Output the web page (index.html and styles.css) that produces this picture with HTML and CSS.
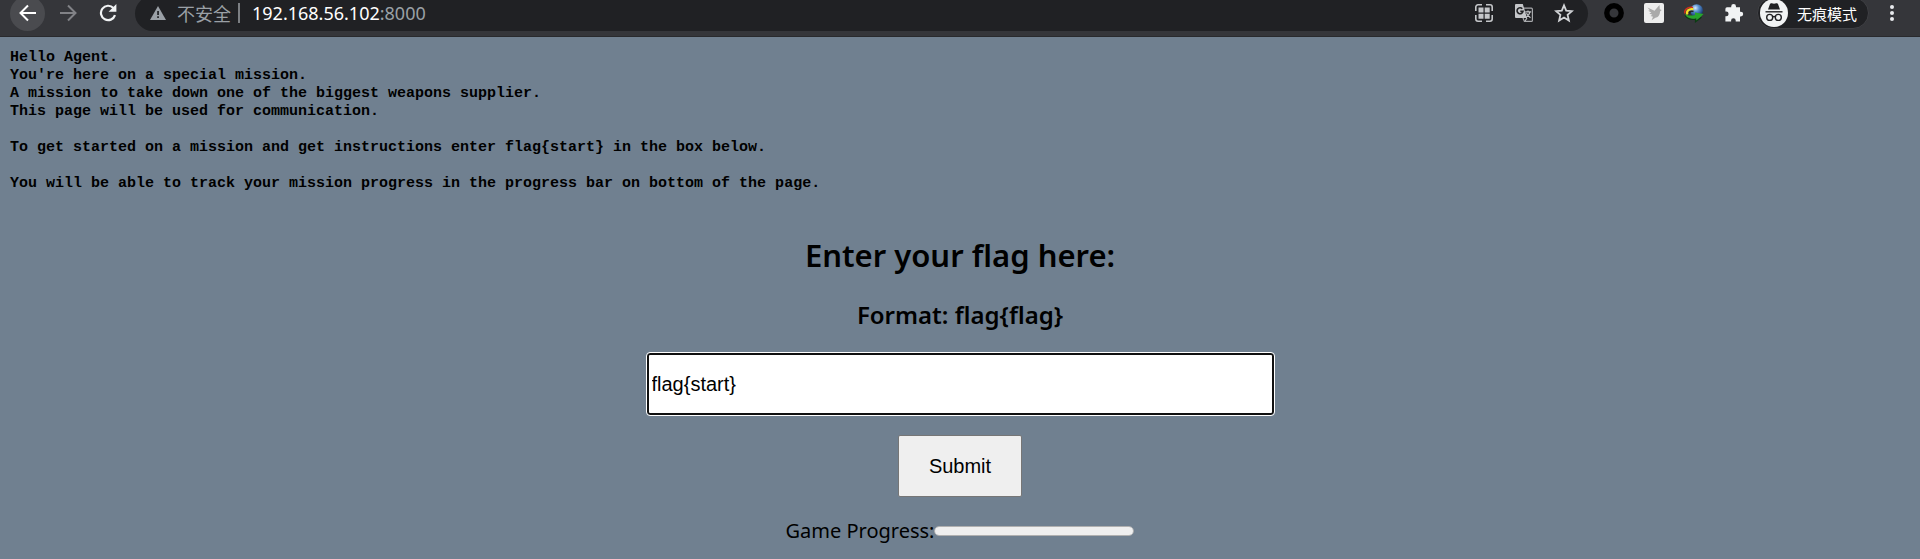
FILE: index.html
```html
<!DOCTYPE html>
<html lang="en">
<head>
<meta charset="utf-8">
<title>192.168.56.102:8000</title>
<link rel="stylesheet" href="styles.css">
</head>
<body>
<header class="toolbar">
  <nav class="nav">
    <button class="nav-button nav-back" type="button" aria-label="Back">
      <svg width="18" height="18" viewBox="0 0 18 18" fill="none" stroke="#fff" stroke-width="2"><path d="M17 9H2M9 1.5L1.5 9L9 16.5"/></svg>
    </button>
    <button class="nav-button" type="button" aria-label="Forward">
      <svg width="18" height="18" viewBox="0 0 18 18" fill="none" stroke="#818286" stroke-width="2"><path d="M1 9H16M9 1.5L16.5 9L9 16.5"/></svg>
    </button>
    <button class="nav-button" type="button" aria-label="Reload">
      <svg width="18" height="18" viewBox="0 0 18 18"><path d="M14.4 4A7.2 7.2 0 1 0 16 11.2" fill="none" stroke="#f1f3f4" stroke-width="2.2"/><path d="M17.4 0V7.8H9.6Z" fill="#f1f3f4"/></svg>
    </button>
  </nav>
  <div class="omnibox">
    <svg width="16" height="14" viewBox="0 0 16 14"><path d="M8 0L16 14H0Z" fill="#9aa0a6"/><path d="M7.2 5h1.7v4H7.2zM7.2 10.3h1.7v1.7H7.2z" fill="#202124"/></svg>
    <span class="security">不安全</span>
    <span class="divider"></span>
    <span class="url">192.168.56.102<span class="port">:8000</span></span>
    <div class="actions">
      <button class="icon-button" type="button" aria-label="QR code">
        <svg width="20" height="20" viewBox="0 0 20 20"><path d="M1.8 8V4a2.2 2.2 0 0 1 2.2-2.2h4M12 1.8h4A2.2 2.2 0 0 1 18.2 4v4M18.2 12v4a2.2 2.2 0 0 1-2.2 2.2h-4M8 18.2H4A2.2 2.2 0 0 1 1.8 16v-4" fill="none" stroke="#c4c6c9" stroke-width="1.6"/><path d="M4.5 4.5h5v5h-5zM10.7 4.5h5v5h-5zM4.5 10.7h5v5h-5zM10.7 10.7h5v5h-5z" fill="#c4c6c9"/></svg>
      </button>
      <button class="icon-button" type="button" aria-label="Translate">
        <svg width="20" height="20" viewBox="0 0 20 20"><path d="M9 5.2h8.4a1 1 0 0 1 1 1v11.2a1 1 0 0 1-1 1h-7L9 15" fill="none" stroke="#a6a8ab" stroke-width="1.2"/><path d="M2 1h6.8l4.2 14H2a1 1 0 0 1-1-1V2a1 1 0 0 1 1-1z" fill="#c4c6c9"/><path d="M8.3 5.8A3 3 0 1 0 9 8.4H6.3" fill="none" stroke="#202124" stroke-width="1.6"/><path d="M11.2 8.8h6M14 7.5v1.3M16 8.8c-.6 2.8-2.2 4.5-4 5.7M12.5 10.2c.9 2 2.3 3.4 4 4.5M11 18l2-3" fill="none" stroke="#c4c6c9" stroke-width="1.2"/></svg>
      </button>
      <button class="icon-button" type="button" aria-label="Bookmark">
        <svg width="20" height="20" viewBox="0 0 20 20"><path d="M10 2.4l2.2 5.2 5.7.5-4.3 3.8 1.3 5.6L10 14.5l-4.9 3 1.3-5.6-4.3-3.8 5.7-.5z" fill="none" stroke="#d2d4d7" stroke-width="1.8"/></svg>
      </button>
    </div>
  </div>
  <div class="extensions">
    <button class="icon-button" type="button" aria-label="Ring extension">
      <svg width="20" height="20" viewBox="0 0 20 20"><circle cx="10" cy="10" r="7.2" fill="#35363a" stroke="#000" stroke-width="5.4"/></svg>
    </button>
    <button class="icon-button" type="button" aria-label="Bird extension">
      <svg width="20" height="20" viewBox="0 0 20 20"><rect width="20" height="20" rx="2" fill="#ededed"/><path d="M3.5 4.5l7 3.2L15.5 2l.3 4.2 1.9.9-1.7 1.3c0 4-2.2 5.8-4.6 6.3L7.6 17.3 9 13.8 6.5 13l1.8-1.2-3-1.2 2-1.2L4.2 7.8l1.7-.5z" fill="#aaa"/></svg>
    </button>
    <button class="icon-button" type="button" aria-label="Download manager">
      <svg width="20" height="20" viewBox="0 0 20 20"><defs><radialGradient id="globe" cx=".4" cy=".3" r=".7"><stop offset="0" stop-color="#d9ecff"/><stop offset=".4" stop-color="#5b93d0"/><stop offset="1" stop-color="#102f66"/></radialGradient></defs><circle cx="12.6" cy="7.6" r="6.4" fill="url(#globe)"/><path d="M9 4.5C3 3.5 0 7 1 10.5" fill="none" stroke="#d0301c" stroke-width="1.5"/><path d="M9.5 6.3C4.500 5.300 2 8.500 3.500 11.500" fill="none" stroke="#f4df25" stroke-width="2.200"/><path d="M9.500 8.500C7 7.500 5 9 5.500 11" fill="none" stroke="#222" stroke-width="1.400"/><path d="M1 10.500c1.500 2 5 2.600 10 1.500V9.500l8.500 1.500-7.200 7.500v-3C6 16.600 1.500 14 1 10.500z" fill="#27a52b"/><path d="M1 12.500c2.400 3.500 6 4.500 10.500 3.800v2.500l6-4.600" fill="none" stroke="#0a3c12" stroke-width="1.200"/></svg>
    </button>
    <button class="icon-button" type="button" aria-label="Extensions">
      <svg width="20" height="20" viewBox="0 0 20 20"><path d="M3 4.300h4.200V3.400a2.400 2.400 0 0 1 4.800 0v.9h4v4.400h.8a2.400 2.400 0 0 1 0 4.800H16v5h-4.300v-.9a2.300 2.300 0 0 0-4.600 0v.9H1.400v-5.200h.8a2.400 2.400 0 0 0 0-4.800h-.8V5.900A1.600 1.600 0 0 1 3 4.300z" fill="#f1f3f4"/></svg>
    </button>
  </div>
  <button class="profile" type="button">
    <svg width="28" height="28" viewBox="0 0 28 28"><circle cx="14" cy="14" r="14" fill="#f1f3f4"/><path d="M8 10.500l2-5.500c.3-.8 1-1 1.800-.7l2.200.5 2.200-.5c.8-.3 1.500-.1 1.800.7l2 5.500z" fill="#202124"/><path d="M5.500 12.800h17" stroke="#202124" stroke-width="1.400"/><g fill="none" stroke="#202124" stroke-width="1.400"><circle cx="9.700" cy="18.400" r="3"/><circle cx="18.300" cy="18.400" r="3"/><path d="M12.600 18c.9-.6 1.900-.6 2.800 0"/></g></svg>
    <span>无痕模式</span>
  </button>
  <button class="icon-button menu" type="button" aria-label="Menu">
    <svg width="20" height="20" viewBox="0 0 20 20" fill="#e8eaed"><circle cx="10" cy="4" r="2"/><circle cx="10" cy="10" r="2"/><circle cx="10" cy="16" r="2"/></svg>
  </button>
</header>
<main class="page">
<pre class="briefing">Hello Agent.
You're here on a special mission.
A mission to take down one of the biggest weapons supplier.
This page will be used for communication.

To get started on a mission and get instructions enter flag{start} in the box below.

You will be able to track your mission progress in the progress bar on bottom of the page.</pre>
  <form class="flag-form">
    <h1 class="title"><label for="flag">Enter your flag here:</label></h1>
    <h2 class="format">Format: flag{flag}</h2>
    <input class="flag-input" id="flag" type="text" value="flag{start}">
    <button class="submit" type="submit">Submit</button>
  </form>
  <div class="status">
    <label for="progress">Game Progress:</label>
    <progress class="progress" id="progress" value="0" max="100"></progress>
  </div>
</main>
</body>
</html>
```
FILE: styles.css
```css
* {
  box-sizing: border-box;
}

body {
  margin: 0;
  min-height: 100vh;
  overflow-x: hidden;
  background: #708090;
  color: #000;
  font-family: "Noto Sans", "Noto Sans CJK SC", sans-serif;
}

button {
  padding: 0;
  border: 0;
  background: none;
  font: inherit;
}

svg {
  display: block;
  flex: none;
}

.toolbar {
  display: flex;
  align-items: center;
  height: 47px;
  margin-top: -10px;
  padding: 0 18px 0 10px;
  background: #35363a;
  border-bottom: 1px solid #292a2d;
}

.nav {
  display: flex;
  gap: 5px;
  margin-right: 10px;
}

.nav-button {
  display: grid;
  place-items: center;
  width: 35px;
  height: 35px;
  border-radius: 50%;
}

.nav-back {
  background: #4a4b4f;
}

.omnibox {
  display: flex;
  flex: 1;
  align-items: center;
  height: 35px;
  padding: 0 14px 0 15px;
  border-radius: 18px;
  background: #202124;
  color: #9aa0a6;
  font-size: 18px;
  line-height: 24px;
}

.security {
  margin-left: 11px;
  font-family: "Noto Sans CJK SC", sans-serif;
}

.divider {
  width: 2px;
  height: 20px;
  margin: 0 12px 0 7px;
  background: #7c7f83;
}

.url {
  color: #fff;
}

.port {
  color: #9aa0a6;
}

.actions,
.extensions {
  display: flex;
  gap: 20px;
}

.actions {
  margin-left: auto;
}

.extensions {
  margin: 0 13px 0 16px;
}

.icon-button {
  width: 20px;
  height: 20px;
}

.profile {
  display: flex;
  align-items: center;
  gap: 9px;
  height: 32px;
  padding: 0 11px 0 2px;
  border: 1px solid #3f4044;
  border-radius: 16px;
  background: #202124;
  color: #fff;
  font-family: "Noto Sans CJK SC", sans-serif;
  font-size: 15px;
}

.menu {
  margin-left: 13px;
}

.page {
  padding: 12px 10px;
}

.briefing {
  margin: 0;
  font-family: "Liberation Mono", monospace;
  font-size: 15px;
  font-weight: bold;
  line-height: 18px;
}

.flag-form {
  display: flex;
  flex-direction: column;
  align-items: center;
}

.title,
.format {
  margin: 0;
  font-weight: 600;
}

.title {
  margin-top: 40px;
  font-size: 31px;
  line-height: 44px;
}

.format {
  margin-top: 22px;
  font-size: 24px;
  line-height: 32px;
}

.flag-input {
  width: 33%;
  height: 62px;
  margin-top: 22px;
  padding: 0 3px;
  border: 2px solid #101010;
  border-radius: 3px;
  outline: 1px solid #fff;
  background: #fff;
  color: #000;
  font-family: "Liberation Sans", sans-serif;
  font-size: 20px;
}

.submit {
  height: 62px;
  margin-top: 20px;
  padding: 0 30px;
  border: 1px solid #767676;
  border-radius: 2px;
  background: #efefef;
  color: #000;
  font-family: "Liberation Sans", sans-serif;
  font-size: 20px;
}

.status {
  display: flex;
  align-items: center;
  justify-content: center;
  margin-top: 20px;
  font-size: 20px;
  line-height: 28px;
}

.progress {
  width: 200px;
  height: 10px;
  border: 1px solid #b0b0b0;
  border-radius: 5px;
  overflow: hidden;
  background: #efefef;
  appearance: none;
}

.progress::-webkit-progress-bar {
  background: #efefef;
}
```
